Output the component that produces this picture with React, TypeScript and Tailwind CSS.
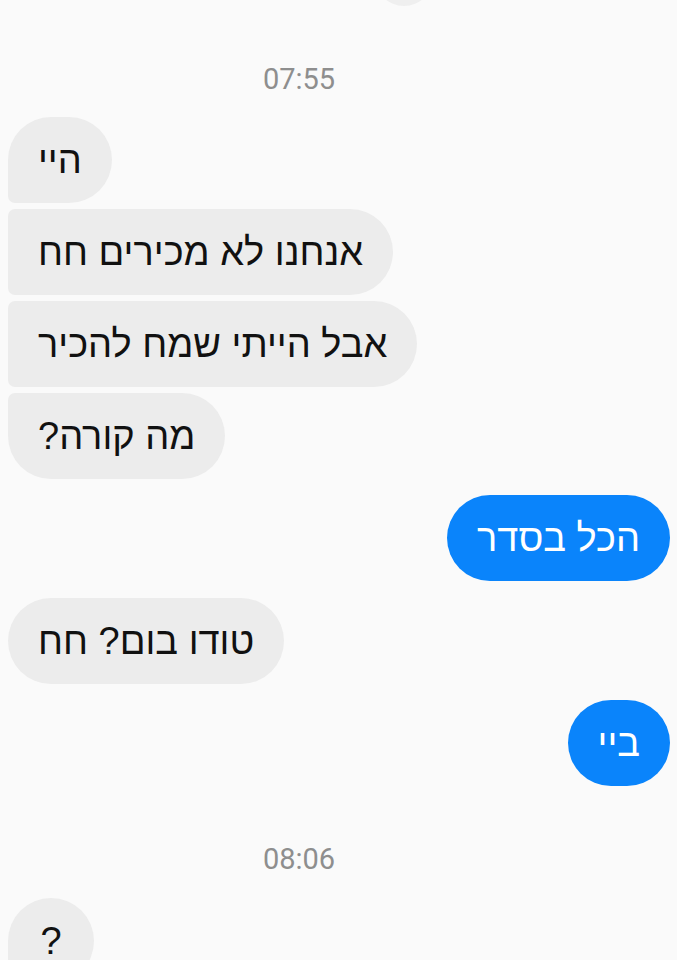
const HEB = { fontFamily: '"Liberation Sans", "DejaVu Sans", sans-serif' };

type Shape = "first" | "middle" | "last" | "single";

const SHAPES: Record<Shape, string> = {
  first: "rounded-tl-[43px] rounded-tr-[43px] rounded-br-[43px] rounded-bl-[7px]",
  middle: "rounded-tl-[7px] rounded-tr-[43px] rounded-br-[43px] rounded-bl-[7px]",
  last: "rounded-tl-[7px] rounded-tr-[43px] rounded-br-[43px] rounded-bl-[43px]",
  single: "rounded-[43px]",
};

function Incoming({ text, shape, className = "" }: { text: string; shape: Shape; className?: string }) {
  return (
    <div className={`shrink-0 flex justify-start pl-[8px] ${className}`}>
      <div
        dir="rtl"
        className={`h-[86px] min-w-[86px] px-[30px] flex items-center justify-center bg-[#ececec] text-[#111] text-[38px] ${SHAPES[shape]}`}
        style={HEB}
      >
        {text}
      </div>
    </div>
  );
}

function Outgoing({ text, className = "" }: { text: string; className?: string }) {
  return (
    <div className={`shrink-0 flex justify-end pr-[7px] ${className}`}>
      <div
        dir="rtl"
        className="h-[86px] min-w-[86px] px-[30px] flex items-center justify-center bg-[#0a84fb] text-white text-[38px] rounded-[43px]"
        style={HEB}
      >
        {text}
      </div>
    </div>
  );
}

function Stamp({ time, className = "" }: { time: string; className?: string }) {
  return (
    <div
      className={`shrink-0 h-[34px] pr-[79px] leading-[34px] text-center text-[29px] text-[#8e8e8e] ${className}`}
      style={{ fontFamily: "Roboto, sans-serif" }}
    >
      {time}
    </div>
  );
}

export default function App() {
  return (
    <div className="w-full h-[960px] overflow-hidden bg-[#fafafa] flex flex-col">
      {/* tail of the previous message, cut off by the top edge */}
      <div className="shrink-0 mt-[-80px] ml-[375px] h-[86px] w-[58px] rounded-full bg-[#efefef]" />

      <Stamp time="07:55" className="mt-[56px]" />

      <Incoming text="היי" shape="first" className="mt-[21px]" />
      <Incoming text="אנחנו לא מכירים חח" shape="middle" className="mt-[6px]" />
      <Incoming text="אבל הייתי שמח להכיר" shape="middle" className="mt-[6px]" />
      <Incoming text="מה קורה?" shape="last" className="mt-[6px]" />

      <Outgoing text="הכל בסדר" className="mt-[16px]" />

      <Incoming text="טודו בום? חח" shape="single" className="mt-[17px]" />

      <Outgoing text="ביי" className="mt-[16px]" />

      <Stamp time="08:06" className="mt-[56px]" />

      <Incoming text="?" shape="first" className="mt-[22px]" />
    </div>
  );
}
